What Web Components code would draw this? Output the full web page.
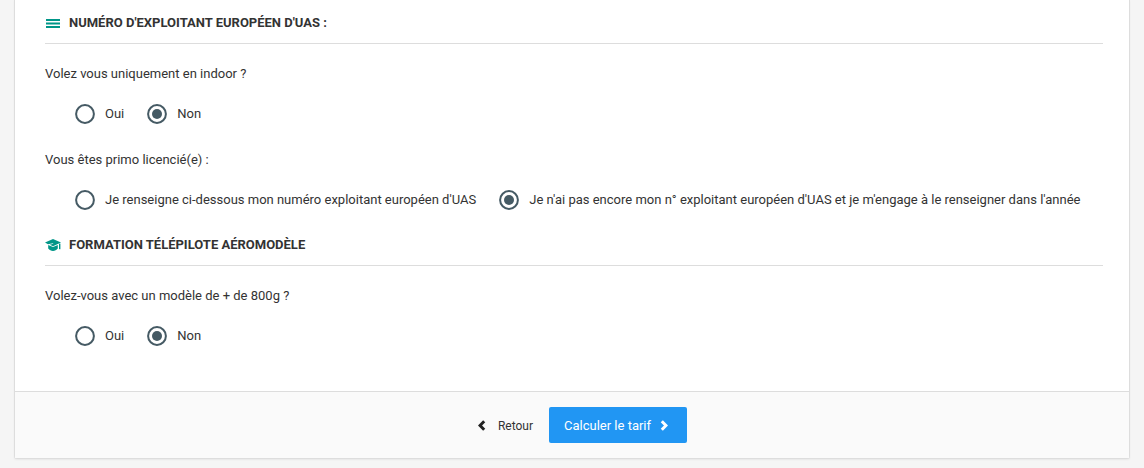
<!DOCTYPE html>
<html lang="fr"><head><meta charset="utf-8"><title>Form</title>
<style>
html,body{margin:0;padding:0;height:468px;overflow:hidden;background:#f5f5f5;font-family:Roboto,"Liberation Sans",sans-serif;}
</style></head><body>
<form-card>
  <section-head icon="bars">NUMÉRO D'EXPLOITANT EUROPÉEN D'UAS :</section-head>
  <field-label>Volez vous uniquement en indoor ?</field-label>
  <radio-row><radio-opt>Oui</radio-opt><radio-opt checked>Non</radio-opt></radio-row>
  <field-label style="margin-top:26px">Vous êtes primo licencié(e) :</field-label>
  <radio-row><radio-opt>Je renseigne ci-dessous mon numéro exploitant européen d'UAS</radio-opt><radio-opt checked>Je n'ai pas encore mon n° exploitant européen d'UAS et je m'engage à le renseigner dans l'année</radio-opt></radio-row>
  <section-head icon="cap" style="margin-top:11px">FORMATION TÉLÉPILOTE AÉROMODÈLE</section-head>
  <field-label>Volez-vous avec un modèle de + de 800g ?</field-label>
  <radio-row><radio-opt>Oui</radio-opt><radio-opt checked>Non</radio-opt></radio-row>
  <form-footer slot="footer"><back-link>Retour</back-link><submit-btn>Calculer le tarif</submit-btn></form-footer>
</form-card>
<script>
function def(name,html,init){customElements.define(name,class extends HTMLElement{constructor(){super();const r=this.attachShadow({mode:'open'});r.innerHTML=typeof html==='function'?html(this):html;}connectedCallback(){if(init)init(this);}});}
def('form-card',`<style>:host{display:block;box-sizing:border-box;margin:0 14px 0 14px;height:459px;background:#fff;border-left:1px solid #ddd;border-right:1px solid #ddd;border-bottom:1px solid #ddd;border-radius:0 0 3px 3px;box-shadow:0 1px 2px rgba(0,0,0,.06);display:flex;flex-direction:column}
.body{flex:1;padding:0 26px 0 30px;min-height:0}</style><div class="body"><slot></slot></div><slot name="footer"></slot>`);
const icons={
bars:`<svg style="margin:1px 0 0 1px;display:block" width="14" height="9" viewBox="0 0 14 9" fill="#009688"><rect y="0" width="14" height="2"/><rect y="3.5" width="14" height="2"/><rect y="7" width="14" height="2"/></svg>`,
cap:`<svg style="display:block" width="16" height="12" viewBox="0 0 16 12"><path fill="#009688" d="M8 0 16 3.6 8 7.2 4.8 5.8 8.4 4.8 8 4.2 3 5.2 0 3.6Z"/><path fill="#009688" d="M3.2 6 8 8.1 12.8 6V9.6C11.6 11.1 9.9 12 8 12S4.4 11.1 3.2 9.6Z"/><rect fill="#009688" x="14" y="4.6" width="1.4" height="5.6"/></svg>`};
def('section-head',h=>`<style>:host{display:flex;align-items:center;box-sizing:border-box;height:44px;padding-top:2px;border-bottom:1px solid #ddd;font:700 13px/16px Roboto,sans-serif;color:#333}
.i{display:flex;width:24px;flex:none}span{display:block}</style><div class="i">${icons[h.getAttribute('icon')]}</div><span><slot></slot></span>`);
def('field-label',`<style>:host{display:block;margin-top:21px;font:13px/18px Roboto,sans-serif;color:#333}</style><slot></slot>`);
def('radio-row',`<style>:host{display:flex;gap:23px;margin-top:20px;padding-left:30px;height:22px;align-items:center}</style><slot></slot>`);
def('radio-opt',h=>`<style>:host{display:flex;align-items:center;gap:10px;font:13px/20px Roboto,sans-serif;color:#333;white-space:nowrap}
svg{flex:none;display:block}</style><svg width="20" height="20" viewBox="0 0 20 20"><circle cx="10" cy="10" r="8.9" fill="none" stroke="#455a64" stroke-width="2"/>${h.hasAttribute('checked')?'<circle cx="10" cy="10" r="5" fill="#455a64"/>':''}</svg><span><slot></slot></span>`);
def('form-footer',`<style>:host{display:flex;justify-content:center;align-items:center;gap:16px;box-sizing:border-box;height:67px;background:#fafafa;border-top:1px solid #ddd;padding-left:21px}</style><slot></slot>`);
def('back-link',`<style>:host{display:flex;align-items:center;gap:12px;font:12px/16px Roboto,sans-serif;color:#333;padding-top:1px}</style><svg width="8" height="11" viewBox="0 0 8 11"><path d="M6.2 1.2 2 5.5 6.2 9.8" fill="none" stroke="#222" stroke-width="3"/></svg><slot></slot>`);
def('submit-btn',`<style>:host{display:flex;align-items:center;gap:9px;box-sizing:border-box;height:36px;padding:2px 19px 0 15px;background:#2196f3;border-radius:2px;color:#fff;font:13px/16px Roboto,sans-serif}svg{margin-top:-2px}</style><slot></slot><svg width="8" height="11" viewBox="0 0 8 11"><path d="M1.8 1.2 6 5.5 1.8 9.8" fill="none" stroke="#fff" stroke-width="3"/></svg>`);
</script>
</body></html>
